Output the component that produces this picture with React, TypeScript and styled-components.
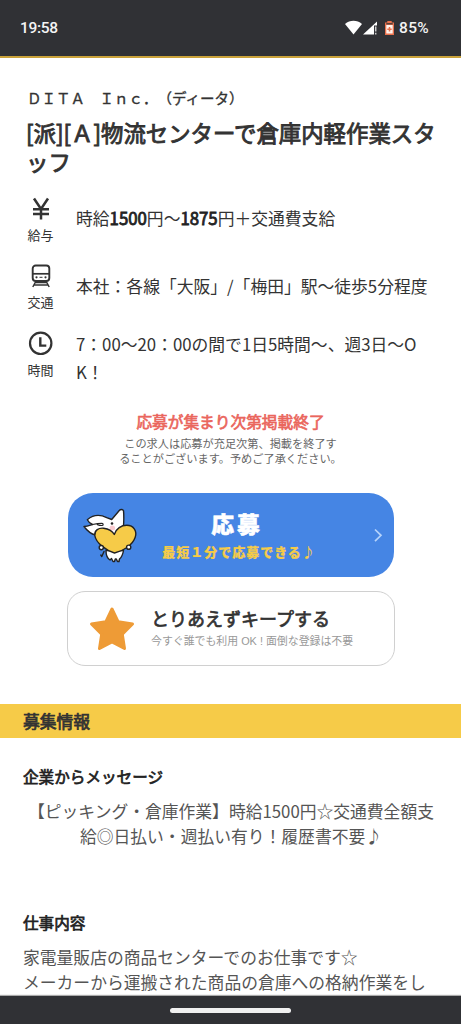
import React from "react";
import styled, { createGlobalStyle } from "styled-components";

const Global = createGlobalStyle`
  * { box-sizing: border-box; }
  body {
    margin: 0;
    background: #fff;
    color: #333;
    font-family: "Noto Sans CJK JP", "Noto Sans", sans-serif;
    text-spacing-trim: space-all;
  }
  p, h1, h2, h3 { margin: 0; font-weight: 400; }
`;

const Screen = styled.div`
  width: 461px;
  height: 1024px;
  overflow: hidden;
  display: flex;
  flex-direction: column;
  background: #fff;
  white-space: nowrap;
`;

const StatusBar = styled.header`
  flex: none;
  height: 58px;
  padding: 0 32px 0 20px;
  display: flex;
  align-items: center;
  justify-content: space-between;
  background: #303135;
  border-bottom: 2px solid #c9a23a;
  color: #f4f4f4;
  font: 500 15.5px/20px Roboto, sans-serif;
`;

const Time = styled.span`
  letter-spacing: -0.3px;
`;

const Battery = styled.span`
  padding-left: 1px;
  letter-spacing: 0.3px;
`;

const StatusIcons = styled.div`
  display: flex;
  align-items: center;
  svg { display: block; }
`;

const Page = styled.main`
  flex: 1;
  min-height: 0;
  overflow: hidden;
`;

const Company = styled.p`
  margin: 29px 0 0 27px;
  font-size: 14.5px;
  line-height: 21px;
  -webkit-text-stroke: 0.35px #333;
`;

const Title = styled.h1`
  margin: 10px 0 0 26px;
  font-size: 22.4px;
  line-height: 29px;
  -webkit-text-stroke: 0.9px #333;
`;

const Details = styled.section`
  margin-top: 20px;
  display: flex;
  flex-direction: column;
`;

const Detail = styled.div<{ $height: number }>`
  height: ${(p) => p.$height}px;
  display: flex;
`;

const Badge = styled.div<{ $gap: number }>`
  width: 76px;
  padding-left: 5px;
  display: flex;
  flex-direction: column;
  align-items: center;
  gap: ${(p) => p.$gap}px;
  font-size: 13px;
  line-height: 18px;
  svg { display: block; }
`;

const DetailText = styled.p<{ $top: number }>`
  padding-top: ${(p) => p.$top}px;
  font-size: 16.8px;
  line-height: 28px;
  b {
    font-weight: 400;
    color: #222;
    -webkit-text-stroke: 0.8px #222;
  }
`;

const Notice = styled.section`
  width: 461px;
  margin-top: 22px;
  text-align: center;
`;

const NoticeTitle = styled.h2`
  font-size: 15.7px;
  line-height: 24px;
  color: #ea665d;
  -webkit-text-stroke: 0.65px #ea665d;
`;

const NoticeText = styled.p`
  margin-top: 2px;
  font-size: 11.2px;
  line-height: 14.6px;
  color: #666;
`;

const ApplyButton = styled.a`
  width: 326px;
  height: 84px;
  margin: 28px 0 0 68px;
  padding: 0 11px 0 14px;
  display: flex;
  align-items: center;
  border-radius: 25px;
  background: #4585e4;
`;

const ApplyLabel = styled.div`
  flex: 1;
  padding: 0 33px 0 0;
  display: flex;
  flex-direction: column;
  align-items: center;
`;

const ApplyTitle = styled.span`
  margin-left: -4px;
  font-size: 22.8px;
  line-height: 32px;
  letter-spacing: 3px;
  font-weight: 900;
  color: #fff;
  -webkit-text-stroke: 0.5px #fff;
`;

const ApplySub = styled.span`
  font-size: 13px;
  line-height: 23px;
  letter-spacing: 1px;
  font-weight: 900;
  color: #f5cb48;
  -webkit-text-stroke: 0.2px #f5cb48;
`;

const KeepButton = styled.a`
  width: 328px;
  height: 75px;
  margin: 14px 0 0 67px;
  padding-left: 21px;
  display: flex;
  align-items: center;
  gap: 16px;
  border: 1px solid #d0d0d0;
  border-radius: 18px;
  background: #fff;
`;

const KeepTitle = styled.div`
  margin-top: -3px;
  font-size: 18px;
  line-height: 26px;
  -webkit-text-stroke: 0.7px #333;
`;

const KeepSub = styled.div`
  font-family: "Liberation Sans", "Noto Sans CJK JP", sans-serif;
  margin-top: 1px;
  font-size: 10.9px;
  line-height: 18px;
  color: #999;
`;

const SectionBar = styled.h2`
  height: 34px;
  margin-top: 38px;
  padding-left: 23px;
  background: #f6cb48;
  font-size: 16.8px;
  line-height: 34px;
  -webkit-text-stroke: 0.75px #333;
`;

const Article = styled.section<{ $top: number; $centered?: boolean }>`
  padding: ${(p) => p.$top}px 22px 0 23px;
  p { text-align: ${(p) => (p.$centered ? "center" : "left")}; }
`;

const ArticleTitle = styled.h3`
  font-size: 15.6px;
  line-height: 24px;
  color: #222;
  -webkit-text-stroke: 0.7px #222;
`;

const ArticleText = styled.p`
  margin-top: 11px;
  font-size: 16.8px;
  line-height: 25px;
  color: #555;
`;

const NavBar = styled.footer`
  flex: none;
  height: 28px;
  padding-top: 12px;
  display: flex;
  justify-content: center;
  background: #303135;
  box-shadow: 0 -1px 1px #aaa;
`;

const Handle = styled.div`
  width: 121px;
  height: 5px;
  border-radius: 3px;
  background: #f0f0f0;
`;

const Yen = () => (
  <svg width="28" height="26" viewBox="0 0 28 26" fill="none" stroke="#333" strokeWidth="2.500">
    <path d="M7 2.500 14 13 21 2.500M14 13v10.500M6 13.300h16M6 18h16" />
  </svg>
);

const Train = () => (
  <svg width="28" height="26" viewBox="0 0 28 26" fill="none" stroke="#333" strokeWidth="1.900">
    <rect x="5.700" y="2.500" width="16.600" height="15.500" rx="3" />
    <path d="M6 10.800h16" strokeWidth="1.700" />
    <circle cx="9.500" cy="14.300" r="1.100" fill="#333" stroke="none" />
    <circle cx="18.500" cy="14.300" r="1.100" fill="#333" stroke="none" />
    <path d="M12.500 14.300h3" strokeWidth="1" />
    <path d="m9 18-3.200 6M19 18l3.200 6M8 19.500h12M6.500 22h15" strokeWidth="1.500" />
  </svg>
);

const Clock = () => (
  <svg width="28" height="26" viewBox="0 0 28 26" fill="none" stroke="#333" strokeWidth="2.200">
    <circle cx="13.700" cy="13.300" r="10.700" />
    <path d="M13.300 7.300v8.300h6" strokeWidth="2.400" />
  </svg>
);

const Mascot = () => (
  <svg width="56" height="60" viewBox="0 0 56 60" stroke="#222" strokeWidth="1.400" strokeLinejoin="round" strokeLinecap="round">
    <path d="m22 46.500-2.200 5-1-1.500" fill="none" />
    <path d="M24 45.500c0 4 1.500 8 4 9.500l1.500-1.500 1.500 3h1.500l.8-2.500h1l1.200 2.500h1.500l.5-2.500c2.500-2 3.500-5.500 4-8.500z" fill="#fff" />
    <path d="M13.500 30C9 29 5 25.500 2 21.500c3 0 5.500-1 8.500-2C8 18.500 6.500 17 5.300 14.700c6-5 13.200-5.200 19.400-2L29.700 14.500 37.300 5.500c1-1.200 3.500-1.500 4.200.2.600 5.500.3 12-.2 18L31 34z" fill="#fff" />
    <path d="M10.500 19.500c3.500-.8 6.500-1.200 9.500-1.200 1.500 0 1.500 2.200 0 2.200-1.500.1-3.200-.3-4.500-.8" fill="none" strokeWidth="1.200" />
    <circle cx="30" cy="18.500" r="1.300" fill="#222" stroke="none" />
    <ellipse cx="30.300" cy="23" rx="2.800" ry="2.500" fill="#f9cbd0" stroke="none" />
    <path d="M32.300 29.500C34 23.500 39.500 20.300 44.700 20.300c7.300 0 10.500 6 8.500 12C50.500 40.500 41 46 32.500 48 24 45.500 14 38 12.800 30.500c-.6-5.500 4.200-7.800 8.700-7.300 4.800.6 9 2.800 10.800 6.300z" fill="#f6cb48" />
    <circle cx="19.300" cy="42.600" r="2.100" fill="#fff" />
    <circle cx="46.700" cy="42.200" r="2.100" fill="#fff" />
  </svg>
);

export default function App() {
  return (
    <>
      <Global />
      <Screen>
        <StatusBar>
          <Time>19:58</Time>
          <StatusIcons>
            <svg width="53" height="16" viewBox="0 0 53 16">
              <path d="M0 4C5-.2 12-.2 17 4L8.500 14.500z" fill="#fff" />
              <path d="m18 14.500 14-13v4h-3v9z" fill="#fff" />
              <path d="M30.700 6.500v5M30.700 12.800v1.700" stroke="#ccc" strokeWidth="1.500" />
              <path d="M40 2.500h2.300V1h4.400v1.500H49V15h-9z" fill="#e8704c" />
              <path d="M41.300 5h6.400v8.500h-6.400z" fill="#fff3ed" />
              <path d="M41.300 3.800h6.400" stroke="#333" strokeWidth="1.200" />
              <path d="M42.300 9.200h4.400M44.500 7v4.400" stroke="#e8704c" strokeWidth="1.500" />
            </svg>
            <Battery>85%</Battery>
          </StatusIcons>
        </StatusBar>

        <Page>
          <Company>ＤＩＴＡ　Ｉｎｃ．（ディータ）</Company>
          <Title>
            [派][Ａ]物流センターで倉庫内軽作業スタ
            <br />
            ッフ
          </Title>

          <Details>
            <Detail $height={67}>
              <Badge $gap={4}>
                <Yen />
                給与
              </Badge>
              <DetailText $top={8}>
                時給<b>1500</b>円〜<b>1875</b>円＋交通費支給
              </DetailText>
            </Detail>
            <Detail $height={67}>
              <Badge $gap={4}>
                <Train />
                交通
              </Badge>
              <DetailText $top={9}>本社：各線「大阪」/「梅田」駅〜徒歩5分程度</DetailText>
            </Detail>
            <Detail $height={58}>
              <Badge $gap={5}>
                <Clock />
                時間
              </Badge>
              <DetailText $top={0}>
                7：00〜20：00の間で1日5時間〜、週3日〜O
                <br />
                K！
              </DetailText>
            </Detail>
          </Details>

          <Notice>
            <NoticeTitle>応募が集まり次第掲載終了</NoticeTitle>
            <NoticeText>
              この求人は応募が充足次第、掲載を終了す
              <br />
              ることがございます。予めご了承ください。
            </NoticeText>
          </Notice>

          <ApplyButton>
            <Mascot />
            <ApplyLabel>
              <ApplyTitle>応募</ApplyTitle>
              <ApplySub>最短１分で応募できる♪</ApplySub>
            </ApplyLabel>
            <svg width="10" height="16" viewBox="0 0 10 16" fill="none" stroke="#b5d3fb" strokeWidth="1.700">
              <path d="m2 2.500 6 5.800-6 5.800" />
            </svg>
          </ApplyButton>

          <KeepButton>
            <svg width="46" height="46" viewBox="0 0 46 46">
              <path
                d="m23 3 6.200 12.800L43.500 18 33.300 28.200 35.500 42.500 23 36 10.500 42.500 12.700 28.200 2.500 18l14.300-2.200z"
                fill="#ee9b36"
                stroke="#ee9b36"
                strokeWidth="3"
                strokeLinejoin="round"
              />
            </svg>
            <div>
              <KeepTitle>とりあえずキープする</KeepTitle>
              <KeepSub>今すぐ誰でも利用 OK ! 面倒な登録は不要</KeepSub>
            </div>
          </KeepButton>

          <SectionBar>募集情報</SectionBar>
          <Article $top={26} $centered>
            <ArticleTitle>企業からメッセージ</ArticleTitle>
            <ArticleText>
              【ピッキング・倉庫作業】時給1500円☆交通費全額支
              <br />
              給◎日払い・週払い有り！履歴書不要♪
            </ArticleText>
          </Article>
          <Article $top={61}>
            <ArticleTitle>仕事内容</ArticleTitle>
            <ArticleText>
              家電量販店の商品センターでのお仕事です☆
              <br />
              メーカーから運搬された商品の倉庫への格納作業をし
            </ArticleText>
          </Article>
        </Page>

        <NavBar>
          <Handle />
        </NavBar>
      </Screen>
    </>
  );
}
